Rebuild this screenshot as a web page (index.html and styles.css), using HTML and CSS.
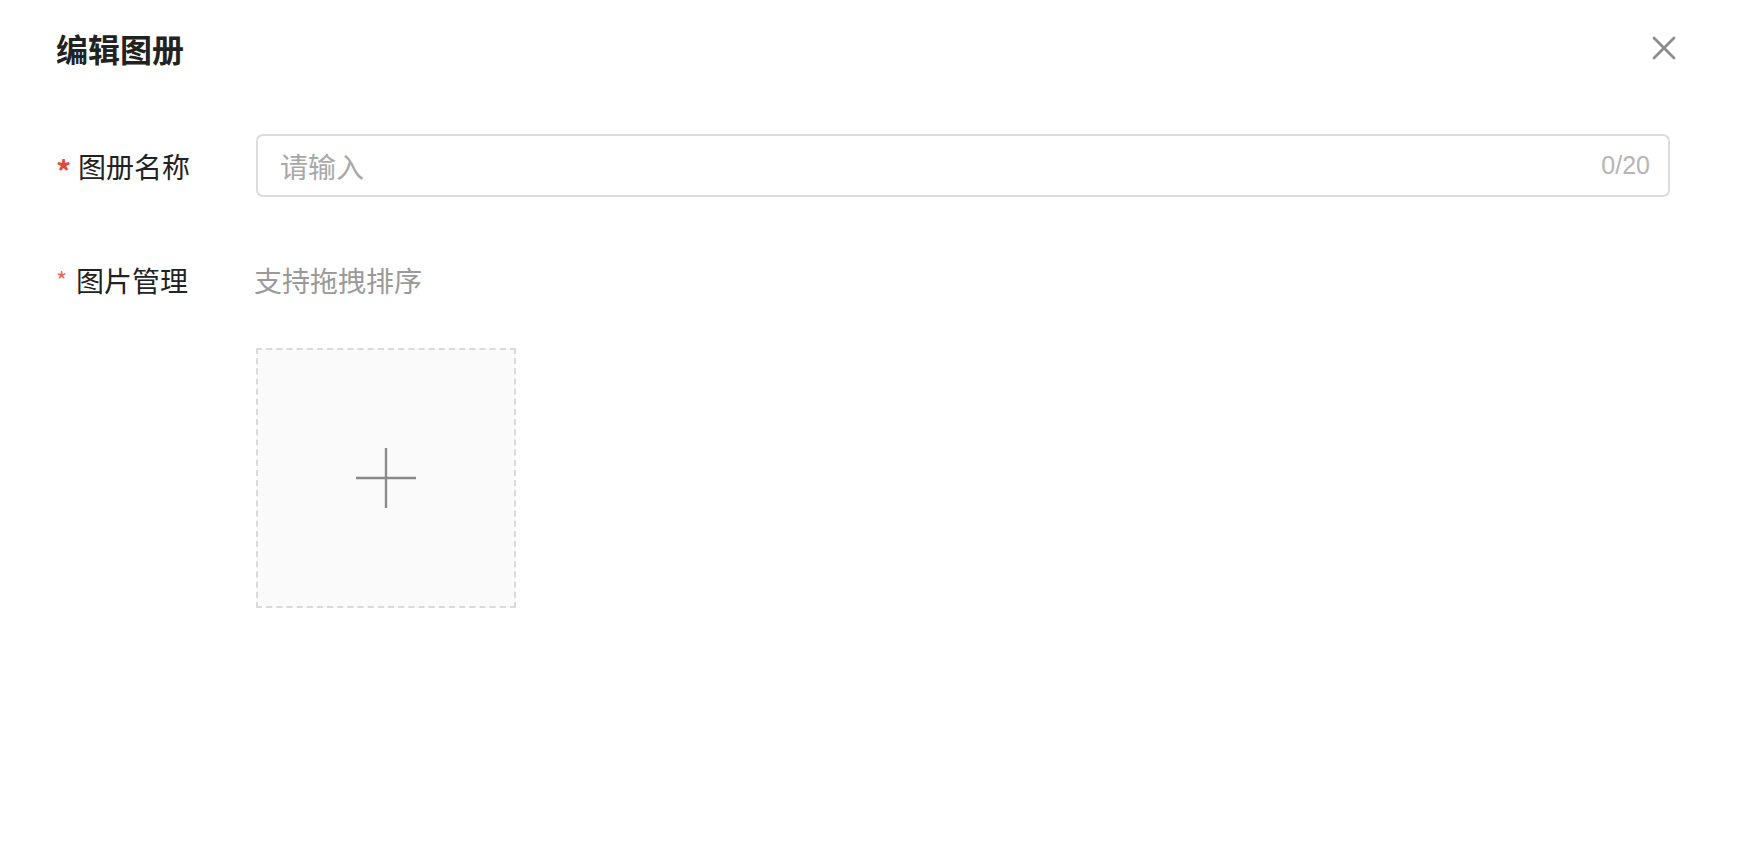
FILE: index.html
```html
<!DOCTYPE html>
<html lang="zh-CN">
<head>
    <meta charset="UTF-8">
    <meta name="viewport" content="width=device-width, initial-scale=1.0">
    <title>编辑图册</title>

    <link rel="stylesheet" href="styles.css">
</head>
<body>
    <div class="dialog">
        <div class="dialog-header">
            <h1>编辑图册</h1>
            <button class="close-btn" aria-label="关闭">
                <svg width="24" height="24" viewBox="0 0 24 24">
                    <path d="M2 2 L22 22 M22 2 L2 22" stroke="#8c8c8c" stroke-width="2.8" stroke-linecap="round" fill="none"/>
                </svg>
            </button>
        </div>

        <form class="form">
            <div class="form-row">
                <label class="form-label" for="albumName"><span class="req">*</span>图册名称</label>
                <div class="input-wrap">
                    <input type="text" id="albumName" placeholder="请输入" maxlength="20">
                    <span class="counter">0/20</span>
                </div>
            </div>
            <div class="form-row form-row-top">
                <label class="form-label"><span class="req req-small">*</span>图片管理</label>
                <div class="field">
                    <div class="hint">支持拖拽排序</div>
                    <div class="upload">
                        <svg width="62" height="62" viewBox="0 0 62 62">
                            <path d="M31 1 V61 M1 31 H61" stroke="#8a8a8a" stroke-width="2.4" fill="none"/>
                        </svg>
                    </div>
                </div>
            </div>
        </form>
    </div>
</body>
</html>
```

FILE: styles.css
```css
/* Reset */
* {
    margin: 0;
    padding: 0;
    box-sizing: border-box;
}
body {
    font-family: "Noto Sans CJK SC", "Noto Sans", sans-serif;
    background: #fff;
    color: #222;
}
.dialog {
    width: 1740px;
    height: 862px;
    padding-left: 56px;
}
.dialog-header {
    height: 96px;
    display: flex;
    align-items: center;
    justify-content: space-between;
    padding-right: 64px;
}
h1 {
    font-size: 32px;
    font-weight: bold;
    color: #222;
    line-height: 40px;
}
.close-btn {
    background: none;
    border: none;
    cursor: pointer;
    display: flex;
}
.form {
    margin-top: 38px;
    padding-right: 70px;
}
.form-row {
    display: flex;
    align-items: center;
    margin-bottom: 63px;
}
.form-row-top {
    align-items: flex-start;
}
.form-label {
    width: 200px;
    flex-shrink: 0;
    font-size: 28px;
    line-height: 40px;
    color: #222;
    display: flex;
    align-items: center;
}
.req {
    color: #e5483b;
    font-weight: bold;
    font-size: 30px;
    width: 22px;
    padding-top: 8px;
}
.req-small {
    font-weight: normal;
    color: #e8665c;
    font-size: 24px;
    width: 20px;
    padding-top: 0;
    align-self: flex-start;
}
.input-wrap {
    flex: 1;
    height: 63px;
    border: 2px solid #dcdcdc;
    border-radius: 7px;
    display: flex;
    align-items: center;
    padding: 0 18px 0 22px;
}
.input-wrap input {
    flex: 1;
    border: none;
    outline: none;
    font-family: inherit;
    font-size: 28px;
    color: #222;
    background: transparent;
}
.input-wrap input::placeholder {
    color: #a8a8a8;
}
.counter {
    font-family: "Liberation Sans", sans-serif;
    font-size: 25px;
    color: #b5b5b5;
}
.field {
    display: flex;
    flex-direction: column;
}
.hint {
    font-size: 28px;
    line-height: 40px;
    color: #9a9a9a;
    margin-left: -2px;
    margin-bottom: 48px;
}
.upload {
    width: 260px;
    height: 260px;
    background: #fafafa;
    border: 2px dashed #dadada;
    display: flex;
    align-items: center;
    justify-content: center;
    cursor: pointer;
}
```
